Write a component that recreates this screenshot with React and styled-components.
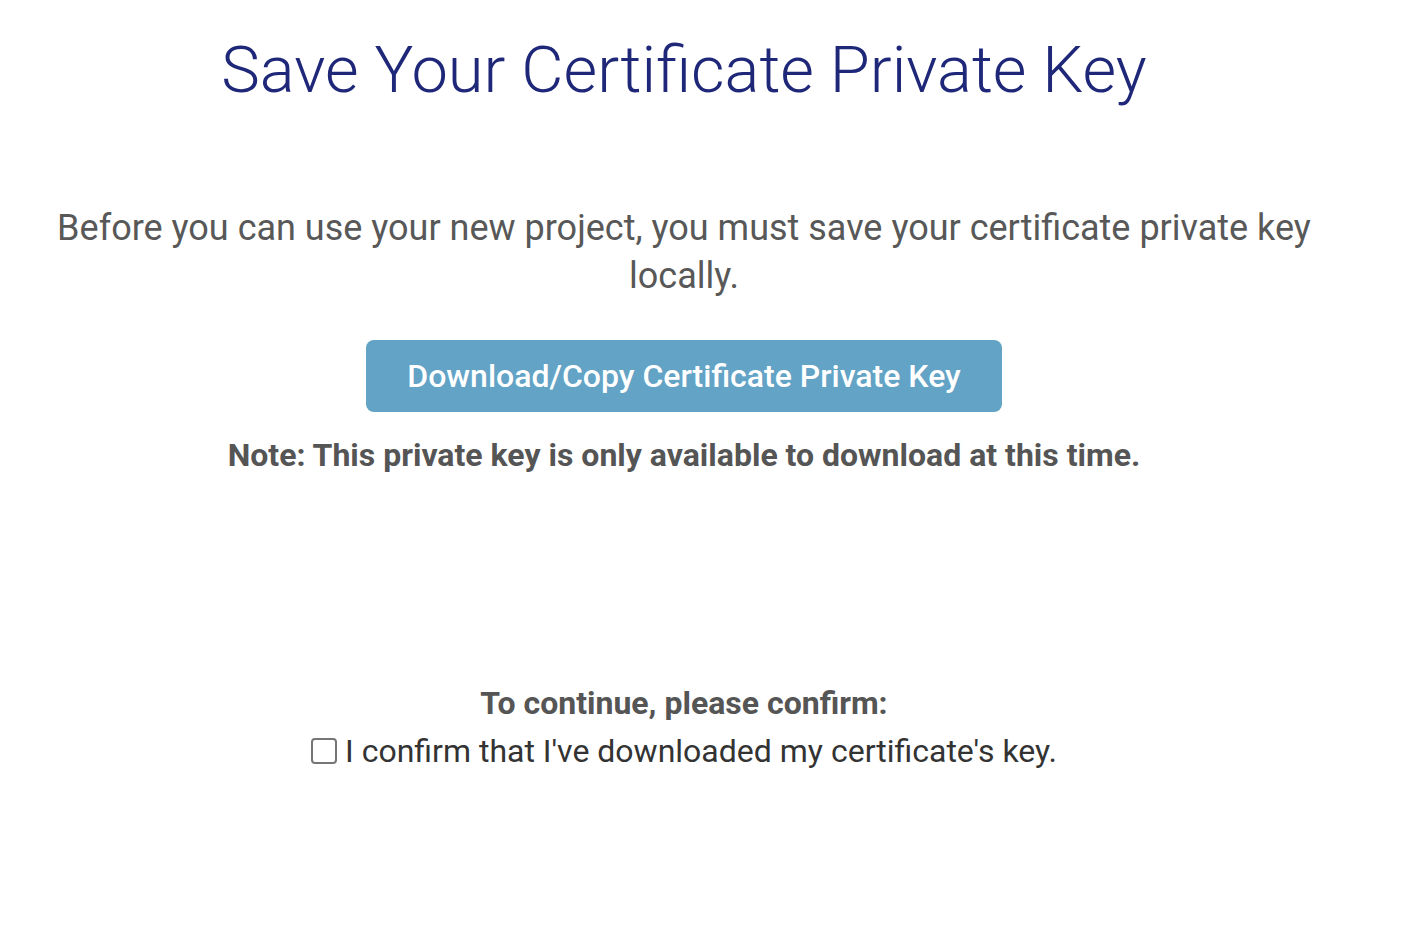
import React, { useState } from 'react';
import styled, { createGlobalStyle } from 'styled-components';

const GlobalStyle = createGlobalStyle`
    body {
        margin: 0;
        background: #ffffff;
        font-family: Roboto, 'Liberation Sans', sans-serif;
    }
`;

const Page = styled.div`
    width: 1368px;
    display: flex;
    flex-direction: column;
    align-items: center;
    text-align: center;
`;

const Title = styled.h1`
    margin: 26px 0 0;
    font-size: 65px;
    font-weight: 300;
    line-height: 88px;
    color: #1f2779;
`;

const Intro = styled.p`
    margin: 90px 0 0;
    padding: 0 40px;
    font-size: 36px;
    line-height: 48px;
    color: #585858;
`;

const DownloadButton = styled.button`
    margin-top: 40px;
    width: 636px;
    height: 72px;
    border: none;
    border-radius: 8px;
    background: #62a3c6;
    color: #ffffff;
    font-family: Roboto, 'Liberation Sans', sans-serif;
    font-size: 32px;
    font-weight: 500;
    cursor: pointer;
`;

const Note = styled.p`
    margin: 23px 0 0;
    font-size: 32px;
    font-weight: 700;
    line-height: 40px;
    color: #555555;
`;

const ConfirmBlock = styled.div`
    margin-top: 204px;
    display: flex;
    flex-direction: column;
    align-items: center;
`;

const ConfirmHeading = styled.div`
    font-size: 32px;
    font-weight: 700;
    line-height: 48px;
    color: #555555;
`;

const ConfirmLabel = styled.label`
    display: flex;
    align-items: center;
    gap: 8px;
    font-size: 32px;
    line-height: 48px;
    color: #333333;
    cursor: pointer;
`;

const Box = styled.input`
    appearance: none;
    margin: 0;
    width: 26px;
    height: 26px;
    border: 2px solid #767676;
    border-radius: 4px;
    background: #fff;
    &:checked {
        background: #62a3c6;
        border-color: #62a3c6;
    }
`;

const App = () => {
    const [confirmed, setConfirmed] = useState(false);
    return (
        <Page>
            <GlobalStyle />
            <Title>Save Your Certificate Private Key</Title>
            <Intro>
                Before you can use your new project, you must save your
                certificate private key locally.
            </Intro>
            <DownloadButton>Download/Copy Certificate Private Key</DownloadButton>
            <Note>Note: This private key is only available to download at this time.</Note>
            <ConfirmBlock>
                <ConfirmHeading>To continue, please confirm:</ConfirmHeading>
                <ConfirmLabel>
                    <Box
                        type="checkbox"
                        checked={confirmed}
                        onChange={(e) => setConfirmed(e.target.checked)}
                    />
                    I confirm that I've downloaded my certificate's key.
                </ConfirmLabel>
            </ConfirmBlock>
        </Page>
    );
};

export default App;
